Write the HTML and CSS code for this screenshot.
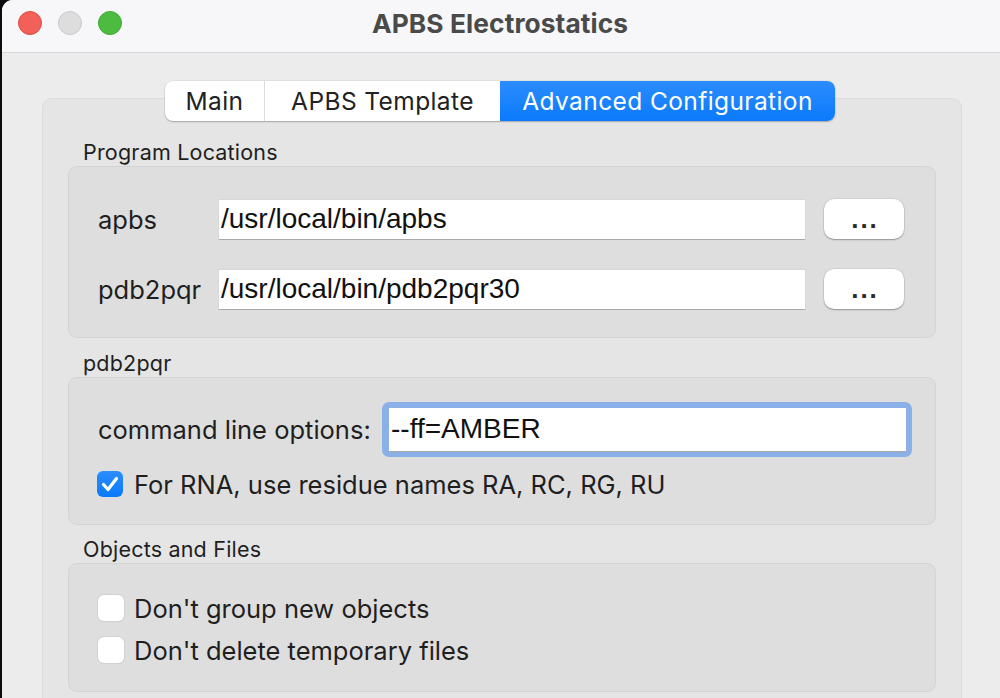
FILE: index.html
```html
<!DOCTYPE html>
<html>
<head>
<meta charset="utf-8">
<link rel="stylesheet" href="styles.css">
</head>
<body>
<div class="window">
  <div class="titlebar">
    <div class="lights">
      <span class="light red"></span>
      <span class="light gray"></span>
      <span class="light green"></span>
    </div>
    <div class="title">APBS Electrostatics</div>
  </div>
  <div class="content">
    <div class="tabs">
      <div class="tab tab-main">Main</div>
      <div class="tab tab-template">APBS Template</div>
      <div class="tab tab-adv active">Advanced Configuration</div>
    </div>
    <div class="tabbox">
      <div class="section-label">Program Locations</div>
      <div class="group group-prog">
        <div class="prog-row">
          <div class="prog-label">apbs</div>
          <div class="field prog-field">/usr/local/bin/apbs</div>
          <div class="dots-btn">...</div>
        </div>
        <div class="prog-row">
          <div class="prog-label">pdb2pqr</div>
          <div class="field prog-field">/usr/local/bin/pdb2pqr30</div>
          <div class="dots-btn">...</div>
        </div>
      </div>
      <div class="section-label">pdb2pqr</div>
      <div class="group group-pdb">
        <div class="cmd-row">
          <div class="cmd-label">command line options:</div>
          <div class="focus-ring">
            <div class="field cmd-field">--ff=AMBER</div>
          </div>
        </div>
        <div class="check-row">
          <span class="checkbox checked">
            <svg viewBox="0 0 26 26" width="26" height="26"><path d="M6.5 13.5 L11 18.5 L19.5 7.5" fill="none" stroke="#fff" stroke-width="3.2" stroke-linecap="round" stroke-linejoin="round"/></svg>
          </span>
          <span class="check-label">For RNA, use residue names RA, RC, RG, RU</span>
        </div>
      </div>
      <div class="section-label label-obj">Objects and Files</div>
      <div class="group group-obj">
        <div class="check-row">
          <span class="checkbox"></span>
          <span class="check-label">Don't group new objects</span>
        </div>
        <div class="check-row">
          <span class="checkbox"></span>
          <span class="check-label">Don't delete temporary files</span>
        </div>
      </div>
    </div>
  </div>
</div>
</body>
</html>
```

FILE: styles.css
```css
* { box-sizing: border-box; }
html, body {
  margin: 0;
  padding: 0;
  background: #0c0c0c;
  width: 1000px;
  height: 698px;
  overflow: hidden;
}
body {
  font-family: Inter, "Liberation Sans", sans-serif;
  color: #1f1f1f;
}
.window {
  margin-left: 2px;
  width: 1010px;
  height: 698px;
  background: #ececec;
  border-top-left-radius: 11px;
  overflow: hidden;
}
.titlebar {
  height: 53px;
  background: #f7f7f9;
  border-bottom: 1px solid #d9d9d9;
  display: flex;
  align-items: center;
  padding-left: 16px;
}
.lights {
  display: flex;
  gap: 16px;
  padding-bottom: 6px;
}
.light {
  width: 24px;
  height: 24px;
  border-radius: 50%;
  display: block;
}
.red { background: #f2605a; border: 1px solid #de4d45; }
.gray { background: #dddddd; border: 1px solid #c9c9c9; }
.green { background: #4dbb40; border: 1px solid #3ea832; }
.title {
  margin-left: 250px;
  font-size: 26.3px;
  font-weight: 700;
  color: #4a4a4a;
  padding-bottom: 6px;
  letter-spacing: 0.1px;
}
.content {
  padding-top: 28px;
}
.tabs {
  position: relative;
  z-index: 2;
  margin-left: 163px;
  display: flex;
  width: 670px;
  height: 40px;
  border-radius: 8px;
  background: #fff;
  box-shadow: 0 1px 1.5px rgba(0,0,0,0.25), 0 0 0 0.5px rgba(0,0,0,0.08);
  overflow: hidden;
}
.tab {
  display: flex;
  align-items: center;
  justify-content: center;
  font-size: 24.5px;
  letter-spacing: 0.4px;
  color: #222;
  height: 40px;
  padding-bottom: 1px;
}
.tab-main { width: 100px; border-right: 1px solid #dcdcdc; }
.tab-template { width: 235px; }
.tab-adv { width: 335px; }
.tab.active {
  background: linear-gradient(#2b8cfd, #0b7afc);
  color: #fff;
}
.tabbox {
  margin-top: -23px;
  margin-left: 40px;
  width: 920px;
  height: 640px;
  background: #e5e5e5;
  border: 1px solid #dcdcdc;
  border-radius: 10px;
  padding: 28px 25px 0 25px;
}
.section-label {
  font-size: 21.5px;
  letter-spacing: 0.2px;
  line-height: 24px;
  padding: 13px 0 2px 15px;
  height: 39px;
  color: #1f1f1f;
}
.label-obj {
  padding-top: 12px;
  height: 38px;
}
.group {
  width: 868px;
  background: #dedede;
  border: 1px solid #d4d4d4;
  border-radius: 9px;
}
.group-prog {
  padding: 32px 0 28px 29px;
  display: flex;
  flex-direction: column;
  gap: 30px;
}
.prog-row {
  display: flex;
  align-items: center;
  height: 40px;
}
.prog-label {
  width: 121px;
  font-size: 25.5px;
}
.field {
  background: #fff;
  font-family: "Liberation Sans", Arial, sans-serif;
  font-size: 28px;
  color: #111;
  display: flex;
  align-items: center;
  padding-left: 2px;
  box-shadow: 0 1px 0 #a9a9a9, 0 0 0 0.5px #cfcfcf;
}
.prog-field {
  width: 586px;
  height: 39px;
  padding-bottom: 1px;
}
.dots-btn {
  margin-left: 19px;
  width: 80px;
  height: 40px;
  background: #fff;
  border-radius: 10px;
  box-shadow: 0 1px 1.5px rgba(0,0,0,0.3), 0 0 0 0.5px rgba(0,0,0,0.1);
  display: flex;
  align-items: center;
  justify-content: center;
  font-family: "Liberation Sans", Arial, sans-serif;
  font-size: 26px;
  font-weight: 700;
  letter-spacing: 2px;
  color: #2a2a2a;
  padding: 0 0 0 2px;
}
.group-pdb {
  height: 148px;
  padding: 24px 0 0 29px;
}
.cmd-row {
  display: flex;
  align-items: center;
  height: 55px;
}
.cmd-label {
  font-size: 25.5px;
  width: 284px;
}
.focus-ring {
  width: 530px;
  height: 55px;
  padding: 6px 6px 6px 7px;
  background: #8ab0e7;
  border-radius: 7px;
}
.cmd-field {
  width: 100%;
  height: 100%;
  box-shadow: 0 1px 0 #a9a9a9;
  padding-bottom: 2px;
}
.check-row {
  display: flex;
  align-items: center;
  height: 26px;
}
.group-pdb .check-row {
  margin-top: 14px;
}
.checkbox {
  width: 26px;
  height: 26px;
  border-radius: 6px;
  background: #fff;
  box-shadow: 0 0 0 1px #d2d2d2, 0 1px 1px rgba(0,0,0,0.1);
  display: block;
  flex: none;
}
.checkbox.checked {
  background: linear-gradient(#2d8dfd, #0a79fc);
  box-shadow: none;
}
.checkbox svg { display: block; }
.check-label {
  margin-left: 11px;
  font-size: 25.5px;
}
.group-obj {
  height: 129px;
  padding: 31px 0 0 29px;
  display: flex;
  flex-direction: column;
  gap: 16px;
}
.group-obj .check-label { margin-left: 10px; }
.group-pdb .checkbox { margin-left: -1px; }
```
